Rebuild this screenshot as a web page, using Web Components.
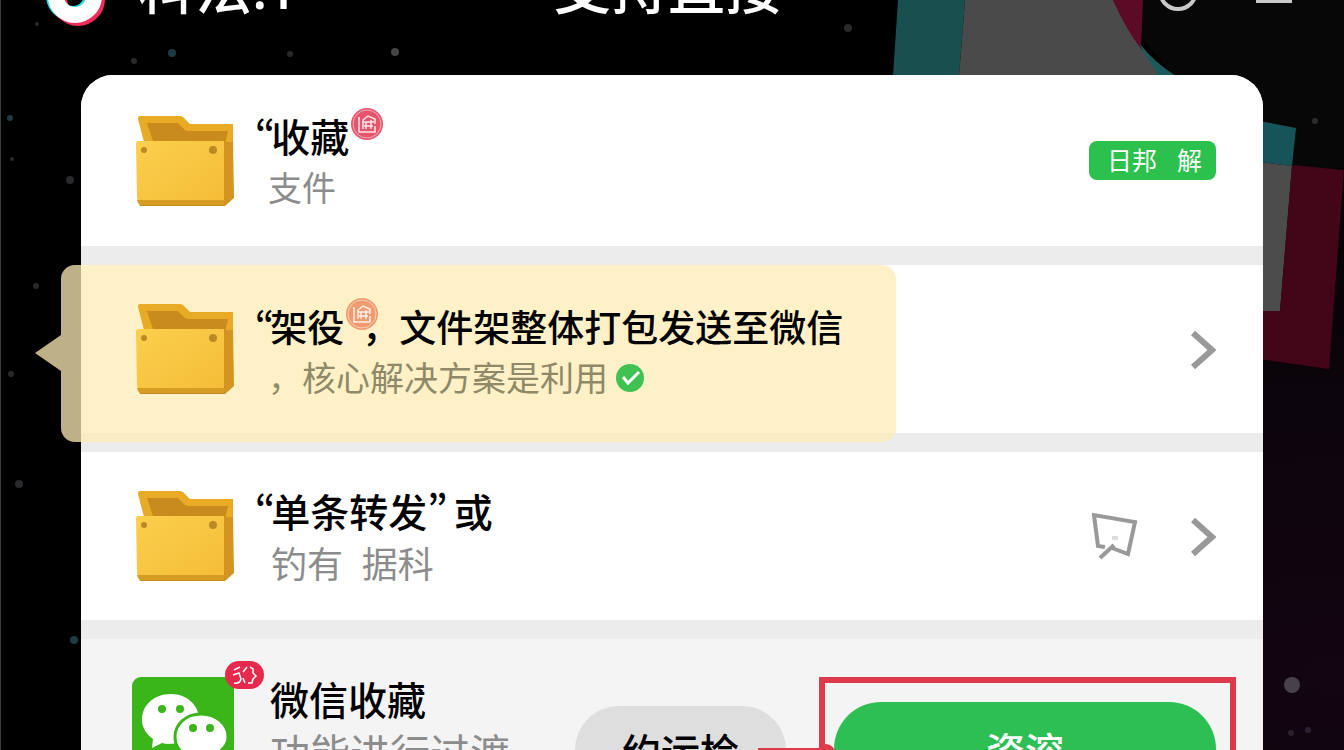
<!DOCTYPE html>
<html lang="zh-CN">
<head>
<meta charset="utf-8">
<title>微信收藏</title>
<style>
  body {
    margin: 0;
    height: 100vh;
    overflow: hidden;
    background: #000;
    font-family: "Noto Sans", "Noto Sans CJK SC", sans-serif;
  }
</style>
</head>
<body>
<share-page></share-page>

<script>
class NightBackdrop extends HTMLElement {
  constructor() {
    super();
    this.attachShadow({ mode: "open" });
    this.shadowRoot.innerHTML = `
    <style>
        :host {
            position: absolute;
            inset: 0;
            overflow: hidden;
            background: radial-gradient(ellipse at 100% 90%, #130512 0%, #0a0409 35%, #000 60%);
            border-left: 1px solid #3c3c3c;
        }
        svg {
            position: absolute;
            top: 0;
        }
        .left { left: 0; }
        .right { right: 0; }
    </style>
    <svg class="left" width="880" height="750">
        <g fill="#29292c">
            <circle cx="36" cy="24" r="2"/><circle cx="133" cy="61" r="3"/>
            <circle cx="289" cy="54" r="3"/><circle cx="394" cy="52" r="4" fill="#444"/>
            <circle cx="847" cy="28" r="4"/><circle cx="11" cy="159" r="2"/>
            <circle cx="69" cy="180" r="4"/><circle cx="35" cy="286" r="3"/>
            <circle cx="10" cy="374" r="3"/><circle cx="18" cy="484" r="4"/>
        </g>
        <g fill="#203a42">
            <circle cx="171" cy="53" r="4"/><circle cx="9" cy="118" r="3"/><circle cx="73" cy="640" r="4"/>
        </g>
    </svg>
    <svg class="right" width="464" height="750">
        <path fill="#070707" d="M232 0H464V168H383L293 76z"/>
        <path fill="#18504f" d="M18 0H85L79 76H13z"/>
        <path fill="#5c0b26" d="M233 0H263L261 48L250 40z"/>
        <path fill="#1b5a5a" d="M260 44Q274 62 296 76H270z"/>
        <path fill="#4a4a4a" d="M85 0H233Q246 30 262 50L279 76H79z"/>
        <path fill="#17545a" d="M380 121L416 128L412 166L380 162z"/>
        <path fill="#4c4c4c" d="M380 162L412 166L400 311H380z"/>
        <path fill="#430518" d="M412 165L464 170L449 369L380 359V311H400z"/>
        <circle cx="435" cy="121" r="3" fill="#2c2c2c"/>
        <circle cx="412" cy="685" r="8" fill="#47414b"/>
        <circle cx="411" cy="733" r="3" fill="#2b2030"/>
        <circle cx="428" cy="730" r="3" fill="#2b2030"/>
    </svg>
    `;
  }
}

class TopBar extends HTMLElement {
  constructor() {
    super();
    this.attachShadow({ mode: "open" });
    this.shadowRoot.innerHTML = `
    <style>
        :host {
            position: relative;
            display: grid;
            grid-template-columns: 1fr auto 1fr;
            align-items: start;
            height: 115px;
            margin-top: -40px;
            padding: 0 52px 0 44px;
            color: #fff;
            font-size: 57px;
            font-weight: 500;
            line-height: 54px;
            box-sizing: border-box;
            white-space: nowrap;
        }
        .brand {
            display: flex;
            gap: 30px;
        }
        h1 {
            margin: 0;
            font: inherit;
        }
        .actions {
            display: flex;
            justify-content: flex-end;
            gap: 57px;
        }
        button {
            display: block;
            border: 0;
            padding: 0;
            background: none;
        }
        svg { display: block; }
    </style>
    <div class="brand">
        <svg width="64" height="68" viewBox="0 0 64 68" fill="none" stroke-width="16">
            <circle cx="29" cy="35" r="19" stroke="#25e5e0"/>
            <path d="M45 35V0" stroke="#25e5e0" stroke-width="12"/>
            <circle cx="34" cy="39" r="19" stroke="#f32c58"/>
            <circle cx="31" cy="36" r="19" stroke="#fff"/>
        </svg>
        <span>科法:T</span>
    </div>
    <h1>支持直接</h1>
    <div class="actions">
        <button aria-label="搜索">
            <svg width="42" height="52" fill="none" stroke="#c9c9c9" stroke-width="4"><circle cx="21" cy="31" r="18"/></svg>
        </button>
        <button aria-label="菜单">
            <svg width="36" height="52" fill="#c9c9c9"><path d="M0 11h36v6H0zM0 25h36v6H0zM0 37h36v6H0z"/></svg>
        </button>
    </div>
    `;
  }
}

class FolderIcon extends HTMLElement {
  constructor() {
    super();
    this.attachShadow({ mode: "open" });
    this.shadowRoot.innerHTML = `
    <style>
        :host { display: block; }
        svg { display: block; }
    </style>
    <svg width="98" height="90" viewBox="0 0 98 90">
        <defs>
            <linearGradient id="front" x1="0" y1="0" x2="1" y2="1">
                <stop offset="0" stop-color="#fbcf4c"/>
                <stop offset="1" stop-color="#f5bd38"/>
            </linearGradient>
        </defs>
        <path fill="#e9ab25" d="M4 0H44Q47 0 49 3L54 8H97V30H9L2 3Q2 0 4 0z"/>
        <path fill="#c98a1e" d="M11 7H42L49 14Q50 15 54 15H92L89 28H18z"/>
        <path fill="#d39420" d="M87 26H97L98 82L89 90H84z"/>
        <path fill="#c88a1c" d="M2 82H89V90H4z"/>
        <path fill="url(#front)" d="M2 25H88V86H5Q1 86 1 80L0 28Q0 25 2 25z"/>
        <path fill="#d69d25" d="M1 84H89L88 89H5Q2 89 1 84z"/>
        <circle cx="8" cy="34" r="3" fill="#b98a26"/>
        <circle cx="77" cy="34" r="4" fill="#b98a26"/>
    </svg>
    `;
  }
}

class WechatIcon extends HTMLElement {
  constructor() {
    super();
    this.attachShadow({ mode: "open" });
    this.shadowRoot.innerHTML = `
    <style>
        :host {
            position: relative;
            display: block;
        }
        svg { display: block; }
        .dot {
            position: absolute;
            top: -16px;
            right: -30px;
        }
    </style>
    <svg width="102" height="102" viewBox="0 0 102 102">
        <rect width="102" height="102" rx="9" fill="#3ab51a"/>
        <path fill="#fff" d="M39 17C22 17 10 28 10 43C10 51 15 58 21 62L20 71L30 66C45 70 67 60 67 43C67 28 55 17 39 17z"/>
        <path fill="#fff" stroke="#3ab51a" stroke-width="3" d="M69 37C54 37 43 47 43 60C43 74 56 83 72 81L84 87L82 78C90 74 96 68 96 60C96 47 84 37 69 37z"/>
        <g fill="#3ab51a">
            <circle cx="30" cy="32" r="4"/><circle cx="48" cy="32" r="4"/>
            <circle cx="61" cy="51" r="4"/><circle cx="78" cy="51" r="4"/>
        </g>
    </svg>
    <svg class="dot" width="39" height="28" viewBox="0 0 39 28">
        <rect width="39" height="28" rx="14" fill="#e62a4e"/>
        <g fill="none" stroke="#fff" stroke-width="1.5">
            <path d="M9 9L15 6M8 14L14 12L16 18Q15 23 9 22"/>
            <path d="M22 6L18 11M18 17L20 22M25 6L28 8V12L31 15L28 18L27 22H23"/>
        </g>
    </svg>
    `;
  }
}

// small round seal set next to a title, like a superscript
class SealMark extends HTMLElement {
  constructor() {
    super();
    this.attachShadow({ mode: "open" });
    this.shadowRoot.innerHTML = `
    <style>
        :host {
            display: inline-block;
            width: 16px;
            height: 32px;
            margin-left: 2px;
            vertical-align: 12px;
            --seal: #e5566d;
        }
        :host([warm]) { --seal: #f09a70; }
        svg {
            display: block;
            overflow: visible;
        }
    </style>
    <svg width="32" height="32" viewBox="0 0 32 32">
        <circle cx="16" cy="16" r="16" style="fill: var(--seal)"/>
        <circle cx="16" cy="16" r="14" fill="none" stroke="#fff" stroke-opacity=".5"/>
        <path fill="none" stroke="#fff" stroke-opacity=".85" stroke-width="1.5" d="M8 9V24H24V18M12 21V12L17 8L24 11V16M12 14H23M15 14V21M20 12V21M13 18H22"/>
    </svg>
    `;
  }
}

class ChevronButton extends HTMLElement {
  constructor() {
    super();
    this.attachShadow({ mode: "open" });
    this.shadowRoot.innerHTML = `
    <style>
        :host { display: block; }
        button {
            display: block;
            border: 0;
            padding: 0;
            background: none;
        }
        svg { display: block; }
    </style>
    <button aria-label="打开">
        <svg width="26" height="40" viewBox="0 0 26 40" fill="none" stroke="#999" stroke-width="6"><path d="M3 4L22 21L3 38"/></svg>
    </button>
    `;
  }
}

class ListRow extends HTMLElement {
  constructor() {
    super();
    this.attachShadow({ mode: "open" });
    this.shadowRoot.innerHTML = `
    <style>
        :host {
            position: relative;
            display: flex;
            align-items: center;
            gap: 21px;
            min-height: 168px;
            padding: 0 47px 0 55px;
            box-sizing: border-box;
            background: #fff;
            --sub-color: #8c8c8c;
            --title-size: 39px;
            --sub-size: 34px;
            --sub-indent: 13px;
        }
        :host([first]) {
            min-height: 171px;
            border-radius: 32px 32px 0 0;
        }
        :host([marked]) {
            --title-size: 37px;
            --sub-color: #8f8967;
        }
        :host([wide]) {
            --sub-size: 36px;
            --sub-indent: 16px;
        }
        :host([app]) {
            align-items: flex-start;
            gap: 36px;
            padding: 38px 27px 38px 51px;
            background: #f4f4f4;
            --sub-size: 40px;
            --sub-indent: 0;
        }
        .callout { display: none; }
        :host([marked]) .callout {
            display: block;
            position: absolute;
            top: 0;
            left: -20px;
            right: 367px;
            bottom: -9px;
            border-radius: 14px;
            background: rgba(254, 236, 180, 0.75);
        }
        .callout::before {
            content: "";
            position: absolute;
            right: 100%;
            top: 70px;
            width: 26px;
            height: 36px;
            background: rgba(254, 236, 180, 0.75);
            clip-path: polygon(0 50%, 100% 0, 100% 100%);
        }
        .icon, .text, .end { position: relative; }
        .text {
            padding-top: 4px;
            white-space: nowrap;
        }
        :host([first]) .text { padding-top: 0; }
        :host([app]) .text {
            padding-top: 0;
            margin-top: -4px;
        }
        h2 {
            height: 54px;
            margin: 0;
            font-size: var(--title-size);
            font-weight: 500;
            line-height: 54px;
            color: #000;
        }
        p {
            display: flex;
            align-items: center;
            gap: 8px;
            margin: 0;
            padding-left: var(--sub-indent);
            font-size: var(--sub-size);
            line-height: 52px;
            color: var(--sub-color);
        }
        .end {
            display: flex;
            align-items: center;
            gap: 52px;
            margin-left: auto;
        }
        :host([app]) .end {
            align-items: flex-start;
            gap: 33px;
        }
    </style>
    <div class="callout"></div>
    <div class="icon"><slot name="icon"></slot></div>
    <div class="text">
        <h2><slot name="title"></slot></h2>
        <p><slot name="sub"></slot></p>
    </div>
    <div class="end"><slot name="end"></slot></div>
    `;
  }
}

class StatusTag extends HTMLElement {
  constructor() {
    super();
    this.attachShadow({ mode: "open" });
    this.shadowRoot.innerHTML = `
    <style>
        :host {
            display: flex;
            gap: 20px;
            padding: 0 14px 0 18px;
            border-radius: 8px;
            background: #2cc04c;
            color: #fff;
            font-size: 25px;
            line-height: 39px;
        }
    </style>
    <slot></slot>
    `;
  }
}

class PillButton extends HTMLElement {
  constructor() {
    super();
    this.attachShadow({ mode: "open" });
    this.shadowRoot.innerHTML = `
    <style>
        :host {
            display: block;
            margin-top: 29px;
        }
        button {
            display: block;
            width: 211px;
            height: 88px;
            border: 0;
            border-radius: 44px;
            padding: 0;
            background: #dedede;
            color: #000;
            font: inherit;
            font-size: 39px;
            font-weight: 500;
        }
        :host([primary]) {
            position: relative;
            margin-top: 0;
            padding: 19px 14px 19px 9px;
            border: 6px solid #df3a4c;
        }
        :host([primary]) button {
            width: 382px;
            height: 94px;
            border-radius: 47px;
            background: #2ebf54;
            color: #fff;
        }
        /* pointer line that runs into the frame */
        :host([primary])::before,
        :host([primary])::after {
            content: "";
            position: absolute;
            background: #df3a4c;
        }
        :host([primary])::before {
            left: -67px;
            top: 65px;
            width: 67px;
            height: 6px;
        }
        :host([primary])::after {
            left: -8px;
            top: 61px;
            width: 18px;
            height: 18px;
            border-radius: 50%;
        }
    </style>
    <button><slot></slot></button>
    `;
  }
}

class SharePage extends HTMLElement {
  constructor() {
    super();
    this.attachShadow({ mode: "open" });
    this.shadowRoot.innerHTML = `
    <style>
        :host {
            position: relative;
            display: flow-root;
            height: 100vh;
            overflow: hidden;
        }
        main {
            position: relative;
            display: flex;
            flex-direction: column;
            gap: 19px;
            margin: 0 81px;
            border-radius: 32px 32px 0 0;
            background: #ececec;
        }
        svg { display: block; }
        /* the Korean face has narrow, curly quotes */
        .quote {
            margin-right: -4px;
            font-family: "Noto Sans CJK KR", sans-serif;
            line-height: 0;
        }
    </style>
    <night-backdrop></night-backdrop>
    <top-bar></top-bar>
    <main>
        <list-row first>
            <folder-icon slot="icon"></folder-icon>
            <span slot="title"><span class="quote" lang="ko">“</span>收藏<seal-mark></seal-mark></span>
            <span slot="sub">支件</span>
            <status-tag slot="end"><span>日邦</span><span>解</span></status-tag>
        </list-row>
        <list-row marked>
            <folder-icon slot="icon"></folder-icon>
            <span slot="title"><span class="quote" lang="ko">“</span>架役<seal-mark warm></seal-mark>，文件架整体打包发送至微信</span>
            <span slot="sub">，核心解决方案是利用</span>
            <svg slot="sub" width="28" height="28" viewBox="0 0 28 28">
                <circle cx="14" cy="14" r="14" fill="#3fc252"/>
                <path d="M7 13L12 19L23 8" fill="none" stroke="#fff" stroke-width="3"/>
            </svg>
            <chevron-button slot="end"></chevron-button>
        </list-row>
        <list-row wide>
            <folder-icon slot="icon"></folder-icon>
            <span slot="title"><span class="quote" lang="ko">“</span>单条转发<span class="quote" lang="ko">”</span> 或</span>
            <span slot="sub">钓有&nbsp; 据科</span>
            <svg slot="end" width="46" height="48" viewBox="0 0 46 48" fill="none" stroke="#999" stroke-width="4">
                <path d="M13 35L6 34L2 3L43 10L36 42L20 36M22 33L8 46"/>
                <path d="M20 26H26" stroke="#ddd"/>
            </svg>
            <chevron-button slot="end"></chevron-button>
        </list-row>
        <list-row app>
            <wechat-icon slot="icon"></wechat-icon>
            <span slot="title">微信收藏</span>
            <span slot="sub">功能进行过渡</span>
            <pill-button slot="end">约运检</pill-button>
            <pill-button slot="end" primary>资溶</pill-button>
        </list-row>
    </main>
    `;
  }
}

customElements.define("night-backdrop", NightBackdrop);
customElements.define("top-bar", TopBar);
customElements.define("folder-icon", FolderIcon);
customElements.define("wechat-icon", WechatIcon);
customElements.define("seal-mark", SealMark);
customElements.define("chevron-button", ChevronButton);
customElements.define("list-row", ListRow);
customElements.define("status-tag", StatusTag);
customElements.define("pill-button", PillButton);
customElements.define("share-page", SharePage);
</script>
</body>
</html>
